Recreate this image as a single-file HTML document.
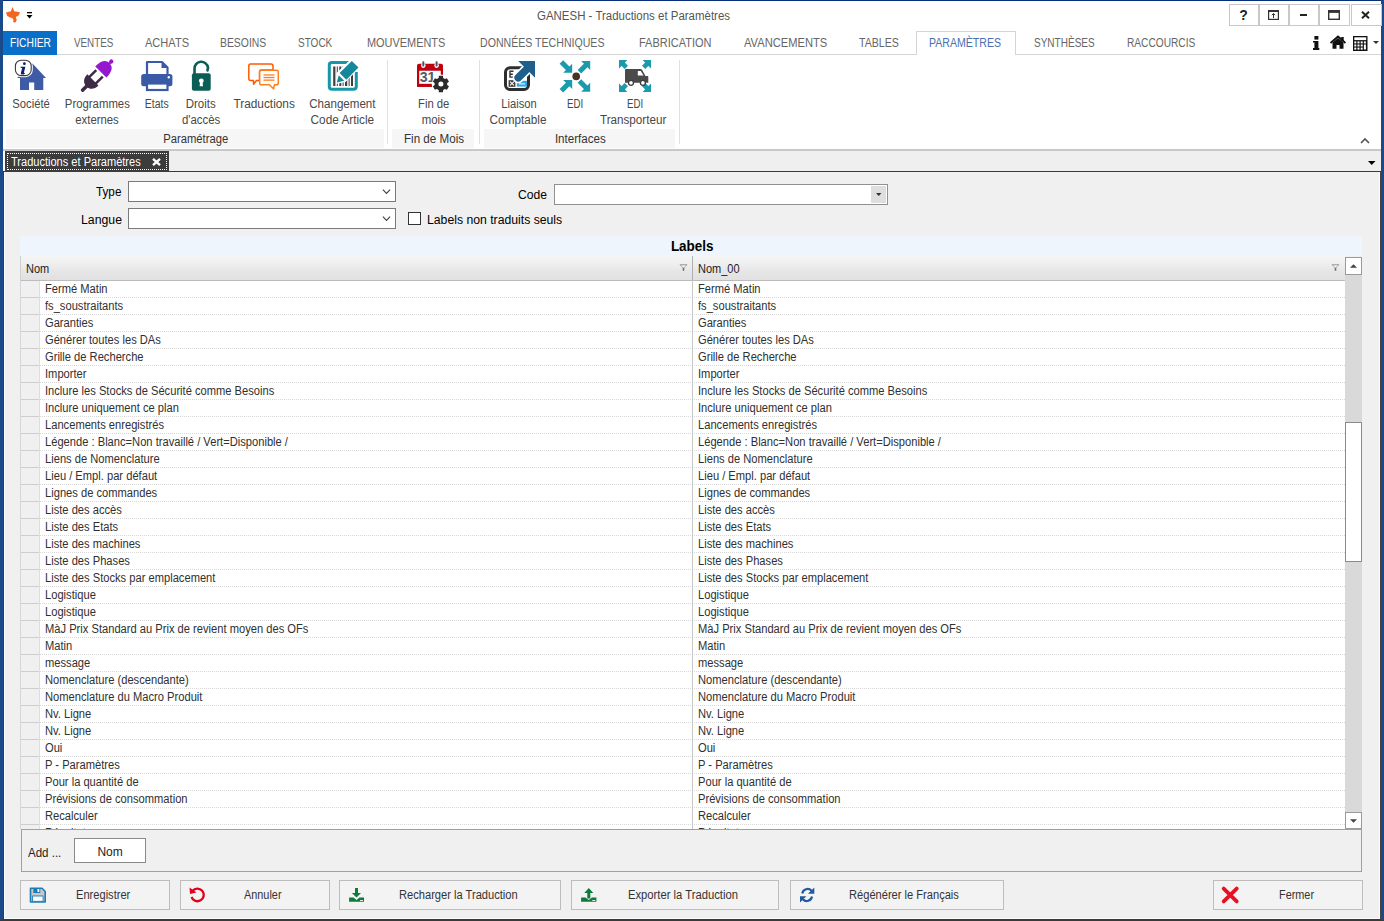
<!DOCTYPE html><html><head><meta charset="utf-8"><style>
html,body{margin:0;padding:0;}
body{width:1384px;height:921px;position:relative;overflow:hidden;background:#f0f0f0;font-family:"Liberation Sans", sans-serif;}
.t{position:absolute;white-space:nowrap;}
div{box-sizing:border-box;}
svg{position:absolute;overflow:visible;}
</style></head><body>
<div style="position:absolute;left:0px;top:0px;width:1384px;height:55px;background:#fff"></div>
<div style="position:absolute;left:0px;top:0px;width:1384px;height:1px;background:#0a2f7a"></div>
<div style="position:absolute;left:0px;top:0px;width:3px;height:921px;background:#1b4a8b"></div>
<div style="position:absolute;left:1381px;top:0px;width:3px;height:921px;background:#1b4a8b"></div>
<div style="position:absolute;left:3px;top:919px;width:1378px;height:2px;background:#3a3a3a"></div>
<div style="position:absolute;left:0px;top:920px;width:1384px;height:1px;background:#3a3a3a"></div>
<div class="t" style="left:537.00px;top:10px;font-size:12px;line-height:13.404px;color:#555;transform:scaleX(0.9551);transform-origin:0 0;">GANESH - Traductions et Paramètres</div>
<svg style="left:0;top:0" width="30" height="30" viewBox="0 0 30 30"><path d="M12.5 7 L14.2 11.3 L20 12.2 L18.6 15.6 L15.8 17 Q17.4 19.6 15.8 22 Q14.2 23.2 13 21.8 Q14.4 20.2 12.6 18.2 L10.2 17.6 L7.2 16 L6 12.4 L10.9 11.3 Z" fill="#f2661f"/></svg>
<svg style="left:26px;top:12px" width="8" height="8" viewBox="0 0 8 8"><rect x="1" y="0" width="5" height="1.3" fill="#000"/><path d="M0.5 3 L6.5 3 L3.5 6.5Z" fill="#000"/></svg>
<div style="position:absolute;left:1229px;top:4px;width:30px;height:22px;border:1px solid #c8c8c8;background:#fff"></div>
<div style="position:absolute;left:1259px;top:4px;width:30px;height:22px;border:1px solid #c8c8c8;background:#fff"></div>
<div style="position:absolute;left:1289px;top:4px;width:30px;height:22px;border:1px solid #c8c8c8;background:#fff"></div>
<div style="position:absolute;left:1319px;top:4px;width:31px;height:22px;border:1px solid #c8c8c8;background:#fff"></div>
<div style="position:absolute;left:1351px;top:4px;width:31px;height:22px;border:1px solid #c8c8c8;background:#fff"></div>
<div class="t" style="left:1239.22px;top:8px;font-size:14px;line-height:15.638px;color:#222;font-weight:bold;">?</div>
<svg style="left:1268px;top:10px" width="11" height="10" viewBox="0 0 11 10"><rect x="0.6" y="0.6" width="9.8" height="8.8" fill="none" stroke="#333" stroke-width="1.2"/><rect x="0.6" y="0.6" width="9.8" height="1.4" fill="#333"/><path d="M5.5 3.6 V8 M3.8 5.2 L5.5 3.5 L7.2 5.2" stroke="#333" stroke-width="1" fill="none"/></svg>
<div style="position:absolute;left:1300px;top:14px;width:7px;height:2px;background:#222"></div>
<svg style="left:1328px;top:10px" width="12" height="10" viewBox="0 0 12 10"><rect x="0.7" y="0.7" width="10.6" height="8.6" fill="none" stroke="#333" stroke-width="1.4"/><rect x="0.7" y="0.7" width="10.6" height="2.2" fill="#333"/></svg>
<svg style="left:1361px;top:11px" width="9" height="8" viewBox="0 0 9 8"><path d="M1 0.8 L8 7.2 M8 0.8 L1 7.2" stroke="#222" stroke-width="2"/></svg>
<div style="position:absolute;left:3px;top:54px;width:1378px;height:1px;background:#d5d5d5"></div>
<div style="position:absolute;left:3px;top:31px;width:54px;height:24px;background:#0a6fc8"></div>
<div class="t" style="left:10.00px;top:37px;font-size:12px;line-height:13.404px;color:#fff;transform:scaleX(0.8541);transform-origin:0 0;">FICHIER</div>
<div style="position:absolute;left:916px;top:31px;width:100px;height:24px;border:1px solid #d5d5d5;border-bottom:none;background:#fff"></div>
<div class="t" style="left:73.70px;top:37px;font-size:12px;line-height:13.404px;color:#666;transform:scaleX(0.8185);transform-origin:0 0;">VENTES</div>
<div class="t" style="left:145.00px;top:37px;font-size:12px;line-height:13.404px;color:#666;transform:scaleX(0.9208);transform-origin:0 0;">ACHATS</div>
<div class="t" style="left:220.20px;top:37px;font-size:12px;line-height:13.404px;color:#666;transform:scaleX(0.8660);transform-origin:0 0;">BESOINS</div>
<div class="t" style="left:298.20px;top:37px;font-size:12px;line-height:13.404px;color:#666;transform:scaleX(0.8341);transform-origin:0 0;">STOCK</div>
<div class="t" style="left:366.50px;top:37px;font-size:12px;line-height:13.404px;color:#666;transform:scaleX(0.9104);transform-origin:0 0;">MOUVEMENTS</div>
<div class="t" style="left:479.50px;top:37px;font-size:12px;line-height:13.404px;color:#666;transform:scaleX(0.8821);transform-origin:0 0;">DONNÉES TECHNIQUES</div>
<div class="t" style="left:639.00px;top:37px;font-size:12px;line-height:13.404px;color:#666;transform:scaleX(0.9163);transform-origin:0 0;">FABRICATION</div>
<div class="t" style="left:743.80px;top:37px;font-size:12px;line-height:13.404px;color:#666;transform:scaleX(0.9289);transform-origin:0 0;">AVANCEMENTS</div>
<div class="t" style="left:858.50px;top:37px;font-size:12px;line-height:13.404px;color:#666;transform:scaleX(0.8841);transform-origin:0 0;">TABLES</div>
<div class="t" style="left:929.00px;top:37px;font-size:12px;line-height:13.404px;color:#4a6fb0;transform:scaleX(0.8803);transform-origin:0 0;">PARAMÈTRES</div>
<div class="t" style="left:1034.30px;top:37px;font-size:12px;line-height:13.404px;color:#666;transform:scaleX(0.8351);transform-origin:0 0;">SYNTHÈSES</div>
<div class="t" style="left:1127.40px;top:37px;font-size:12px;line-height:13.404px;color:#666;transform:scaleX(0.8466);transform-origin:0 0;">RACCOURCIS</div>
<svg style="left:1313px;top:36px" width="7" height="15" viewBox="0 0 7 15"><rect x="1.4" y="0" width="4" height="3.6" fill="#111"/><path d="M0 5 H5.4 V12 H6.3 V14 H0 V12 H1.4 V6.5 H0 Z" fill="#111"/></svg>
<svg style="left:1330px;top:36px" width="16" height="13" viewBox="0 0 16 13"><path d="M0.5 7 L8 0.5 L15.5 7" stroke="#111" stroke-width="1.8" fill="none"/><path d="M2.5 6.5 L8 2 L13.5 6.5 V12.8 H9.5 V9 H6.5 V12.8 H2.5Z" fill="#111"/><rect x="11.2" y="1" width="2.5" height="4" fill="#111"/></svg>
<svg style="left:1353px;top:36px" width="15" height="15" viewBox="0 0 15 15"><rect x="0" y="0" width="14.5" height="15" fill="#111"/><rect x="1.3" y="1.3" width="11.9" height="2.8" fill="#fff"/><rect x="1.3" y="5.4" width="2" height="2" fill="#fff"/><rect x="4.5" y="5.4" width="2" height="2" fill="#fff"/><rect x="7.7" y="5.4" width="2" height="2" fill="#fff"/><rect x="10.9" y="5.4" width="2" height="2" fill="#fff"/><rect x="1.3" y="8.5" width="2" height="2" fill="#fff"/><rect x="4.5" y="8.5" width="2" height="2" fill="#fff"/><rect x="7.7" y="8.5" width="2" height="2" fill="#fff"/><rect x="1.3" y="11.6" width="2" height="2" fill="#fff"/><rect x="4.5" y="11.6" width="2" height="2" fill="#fff"/><rect x="7.7" y="11.6" width="2" height="2" fill="#fff"/><rect x="10.9" y="8.5" width="2" height="5" fill="#fff"/></svg>
<svg style="left:1373px;top:41px" width="6" height="3" viewBox="0 0 6 3"><path d="M0 0 H6 L3 3Z" fill="#333"/></svg>
<div style="position:absolute;left:3px;top:55px;width:1378px;height:94px;background:#fff"></div>
<div style="position:absolute;left:6px;top:129px;width:378px;height:19px;background:#f6f6f6"></div>
<div style="position:absolute;left:392px;top:129px;width:82px;height:19px;background:#f6f6f6"></div>
<div style="position:absolute;left:484px;top:129px;width:191px;height:19px;background:#f6f6f6"></div>
<div style="position:absolute;left:387px;top:60px;width:1px;height:84px;background:#e0e0e0"></div>
<div style="position:absolute;left:479px;top:60px;width:1px;height:84px;background:#e0e0e0"></div>
<div style="position:absolute;left:679px;top:60px;width:1px;height:84px;background:#e0e0e0"></div>
<div style="position:absolute;left:3px;top:149px;width:1378px;height:2px;background:#c8c8c8"></div>
<svg style="left:1360px;top:137px" width="10" height="7" viewBox="0 0 10 7"><path d="M1 6 L5 2 L9 6" stroke="#555" stroke-width="1.6" fill="none"/></svg>
<div class="t" style="left:11.39px;top:98px;font-size:12px;line-height:13.404px;color:#484848;transform:scaleX(0.9394);transform-origin:50% 0;">Société</div>
<div class="t" style="left:63.16px;top:98px;font-size:12px;line-height:13.404px;color:#484848;transform:scaleX(0.9463);transform-origin:50% 0;">Programmes</div>
<div class="t" style="left:74.49px;top:114px;font-size:12px;line-height:13.404px;color:#484848;transform:scaleX(0.9429);transform-origin:50% 0;">externes</div>
<div class="t" style="left:143.13px;top:98px;font-size:12px;line-height:13.404px;color:#484848;transform:scaleX(0.8740);transform-origin:50% 0;">Etats</div>
<div class="t" style="left:185.33px;top:98px;font-size:12px;line-height:13.404px;color:#484848;transform:scaleX(0.9573);transform-origin:50% 0;">Droits</div>
<div class="t" style="left:180.74px;top:114px;font-size:12px;line-height:13.404px;color:#484848;transform:scaleX(0.9500);transform-origin:50% 0;">d'accès</div>
<div class="t" style="left:233.17px;top:98px;font-size:12px;line-height:13.404px;color:#484848;transform:scaleX(0.9879);transform-origin:50% 0;">Traductions</div>
<div class="t" style="left:308.34px;top:98px;font-size:12px;line-height:13.404px;color:#484848;transform:scaleX(0.9634);transform-origin:50% 0;">Changement</div>
<div class="t" style="left:310.15px;top:114px;font-size:12px;line-height:13.404px;color:#484848;transform:scaleX(0.9814);transform-origin:50% 0;">Code Article</div>
<div class="t" style="left:416.62px;top:98px;font-size:12px;line-height:13.404px;color:#484848;transform:scaleX(0.9414);transform-origin:50% 0;">Fin de</div>
<div class="t" style="left:421.43px;top:114px;font-size:12px;line-height:13.404px;color:#484848;transform:scaleX(0.9472);transform-origin:50% 0;">mois</div>
<div class="t" style="left:499.69px;top:98px;font-size:12px;line-height:13.404px;color:#484848;transform:scaleX(0.9309);transform-origin:50% 0;">Liaison</div>
<div class="t" style="left:488.78px;top:114px;font-size:12px;line-height:13.404px;color:#484848;transform:scaleX(0.9787);transform-origin:50% 0;">Comptable</div>
<div class="t" style="left:564.80px;top:98px;font-size:12px;line-height:13.404px;color:#484848;transform:scaleX(0.8098);transform-origin:50% 0;">EDI</div>
<div class="t" style="left:624.80px;top:98px;font-size:12px;line-height:13.404px;color:#484848;transform:scaleX(0.8098);transform-origin:50% 0;">EDI</div>
<div class="t" style="left:599.07px;top:114px;font-size:12px;line-height:13.404px;color:#484848;transform:scaleX(0.9728);transform-origin:50% 0;">Transporteur</div>
<div class="t" style="left:160.81px;top:133px;font-size:12px;line-height:13.404px;color:#333;transform:scaleX(0.9370);transform-origin:50% 0;">Paramétrage</div>
<div class="t" style="left:402.89px;top:133px;font-size:12px;line-height:13.404px;color:#333;transform:scaleX(0.9674);transform-origin:50% 0;">Fin de Mois</div>
<div class="t" style="left:554.15px;top:133px;font-size:12px;line-height:13.404px;color:#333;transform:scaleX(0.9659);transform-origin:50% 0;">Interfaces</div>
<svg style="left:0;top:0" width="1384" height="160" viewBox="0 0 1384 160"><path d="M17 78 L32.5 63.5 L46 78 L43.3 78 L43.3 90 L34.2 90 L34.2 82.5 L29 82.5 L29 90 L20 90 L20 78 Z" fill="#3d5ba6"/><rect x="14.6" y="59.4" width="17.4" height="17" rx="6.5" fill="#fff" stroke="#fff" stroke-width="1.6"/><rect x="15.4" y="60.2" width="15.8" height="15.4" rx="5.8" fill="#fff" stroke="#3a3a3a" stroke-width="1.1"/><circle cx="24.4" cy="63.7" r="1.4" fill="#0d1f6e"/><path d="M20.8 66.8 H25.4 L23.9 72.4 Q23.8 73.1 24.7 72.8 L24.9 73.7 Q23.2 74.8 21.6 74.5 Q20.6 74.2 20.9 73.1 L22.2 67.9 H20.6 Z" fill="#0d1f6e"/><g transform="rotate(45 97 75.8)"><circle cx="97" cy="55.6" r="2.1" fill="#9518cf"/><rect x="96" y="56" width="2" height="3" fill="#9518cf"/><path d="M89.15 70.4 C89.15 62 92 58 97 58 C102 58 104.85 62 104.85 70.4 Z" fill="#9518cf"/><rect x="91.2" y="72.3" width="2.5" height="10" fill="#3d2b47"/><rect x="100.4" y="72.3" width="2.5" height="10" fill="#3d2b47"/><path d="M89.15 81.6 H104.85 C104.85 87 102 90.8 97 90.8 C92 90.8 89.15 87 89.15 81.6 Z" fill="#3d2b47"/><rect x="95.2" y="89" width="3.6" height="8.8" rx="1.5" fill="#3d2b47"/></g><path d="M147 62 H162 L167.5 67.5 V75 H147 Z" fill="#fff" stroke="#3a5aa8" stroke-width="2.2" stroke-linejoin="round"/><path d="M161.5 62 V68 H167.5Z" fill="#3a5aa8"/><rect x="141.2" y="74" width="31.2" height="12.2" rx="2.5" fill="#3a5aa8"/><circle cx="168.8" cy="77.2" r="1.2" fill="#fff"/><rect x="147" y="83.5" width="20.5" height="6.5" fill="#fff" stroke="#3a5aa8" stroke-width="2.2"/><path d="M194.5 74 V69 A6.8 6.8 0 0 1 208 67.5 L207.5 70.5" fill="none" stroke="#0b5e55" stroke-width="2.6" stroke-linecap="round"/><rect x="191.9" y="73.2" width="18.8" height="17.6" rx="2" fill="#0b5e55"/><circle cx="201.3" cy="80.8" r="2.4" fill="#fff"/><path d="M200.1 81.5 H202.5 L203 86.3 H199.6Z" fill="#fff"/><path d="M250.5 64 H271 Q273 64 273 66 V70 H261 Q259.5 70 259.5 72 V80.5 H256.5 L253.5 84.3 L253.5 80.5 H250.5 Q248.8 80.5 248.8 78.5 V66 Q248.8 64 250.5 64 Z" fill="none" stroke="#ff5a00" stroke-width="1.5" stroke-linejoin="round"/><path d="M261.5 70.2 H276.5 Q278.3 70.2 278.3 72 V83 Q278.3 84.8 276.5 84.8 H274.5 L273.5 88.8 L269.5 84.8 H261.5 Q259.7 84.8 259.7 83 V72 Q259.7 70.2 261.5 70.2 Z" fill="#fff" stroke="#ff7f1e" stroke-width="1.5" stroke-linejoin="round"/><rect x="263.5" y="74.3" width="11" height="1.3" fill="#ff7f1e"/><rect x="263.5" y="76.9" width="11" height="1.3" fill="#ff7f1e"/><rect x="263.5" y="79.5" width="11" height="1.3" fill="#ff7f1e"/><path d="M350 62.6 H332 Q329.3 62.6 329.3 65.3 V86.5 Q329.3 89.2 332 89.2 H353.5 Q356.3 89.2 356.3 86.5 V72" fill="none" stroke="#1796a8" stroke-width="3"/><rect x="333.2" y="66.5" width="2.2" height="19.5" fill="#3f3f3f"/><rect x="336.8" y="66.5" width="1.0" height="19.5" fill="#3f3f3f"/><rect x="339.3" y="66.5" width="2.0" height="19.5" fill="#3f3f3f"/><rect x="342.6" y="66.5" width="1.0" height="19.5" fill="#3f3f3f"/><rect x="345" y="66.5" width="2.2" height="19.5" fill="#3f3f3f"/><rect x="348.6" y="66.5" width="1.0" height="19.5" fill="#3f3f3f"/><rect x="351" y="66.5" width="2.0" height="19.5" fill="#3f3f3f"/><path d="M336 84 L336.5 73 L351.5 58.5 L360.5 67 L345.5 82 Z" fill="#fff"/><path d="M351.8 61 L358.5 67.5 L346.3 79.7 L339.6 73 Z" fill="#15879a"/><path d="M338.7 75.3 L344.2 80.8 L336.8 82.6 Z" fill="#15879a"/><path d="M418.1 74.5 V85.7 H432 M418.1 70 V85.7" fill="none" stroke="#c0000e" stroke-width="2.2"/><rect x="417" y="83.8" width="16" height="3" fill="#c0000e"/><path d="M417 70.8 V65.8 Q417 63.8 419 63.8 H441 Q443 63.8 443 65.8 V74.7 H440.8 V70.8 Z" fill="#c0000e"/><circle cx="423.3" cy="65.6" r="2.3" fill="#fff"/><circle cx="436.6" cy="65.6" r="2.3" fill="#fff"/><rect x="422.3" y="61.2" width="2" height="5.4" rx="0.8" fill="#46576a"/><rect x="435.6" y="61.2" width="2" height="5.4" rx="0.8" fill="#46576a"/><text x="419.8" y="82.4" font-family="Liberation Sans" font-weight="bold" font-size="14.2" fill="#4f5c69" letter-spacing="-0.3">31</text><circle cx="440.9" cy="84" r="9.2" fill="#fff"/><polygon points="444.05,78.54 443.16,78.12 442.93,75.85 438.87,75.85 438.64,78.12 437.75,78.54 437.75,78.54 436.94,79.10 434.86,78.16 432.83,81.68 434.68,83.01 434.60,84.00 434.60,84.00 434.68,84.99 432.83,86.32 434.86,89.84 436.94,88.90 437.75,89.46 437.75,89.46 438.64,89.88 438.87,92.15 442.93,92.15 443.16,89.88 444.05,89.46 444.05,89.46 444.86,88.90 446.94,89.84 448.97,86.32 447.12,84.99 447.20,84.00 447.20,84.00 447.12,83.01 448.97,81.68 446.94,78.16 444.86,79.10 444.05,78.54" fill="#2b2b2b" stroke="#fff" stroke-width="0.01"/><circle cx="440.9" cy="84" r="2.5" fill="#fff"/><rect x="505.5" y="67.8" width="23" height="21.8" rx="4.5" fill="#fff" stroke="#2e2e2e" stroke-width="3"/><path d="M509.3 71.3 H513.5 M509.3 74.2 H512.8 M509.3 77.1 H513.5 M510 71 V77.5" stroke="#333" stroke-width="1.4"/><rect x="508.6" y="80.2" width="6.8" height="6.6" fill="#3a3a3a"/><path d="M510 81.6 L514 85.4 M514 81.6 L510 85.4" stroke="#fff" stroke-width="1.1"/><rect x="516.8" y="80.8" width="10.2" height="5.8" fill="#2ca8ea"/><rect x="519" y="83.4" width="6" height="1" fill="#fff"/><line x1="527" y1="69" x2="518.2" y2="77.8" stroke="#fff" stroke-width="11" stroke-linecap="round"/><polygon points="536.5,59 515,59 536.5,80.5" fill="#fff"/><line x1="527" y1="69" x2="518.2" y2="77.8" stroke="#1f5f8b" stroke-width="7.6" stroke-linecap="round"/><polygon points="535,61 518.2,61 535,77.8" fill="#1f5f8b"/><polygon points="572.2,72.8 563.2,72.8 572.2,63.8" fill="#1a9aaa"/><line x1="568.1500000000001" y1="68.75" x2="561.4000000000001" y2="62.0" stroke="#1a9aaa" stroke-width="5"/><polygon points="590.2,61 581.2,61 590.2,70" fill="#1a9aaa"/><line x1="586.1500000000001" y1="65.05" x2="579.4000000000001" y2="71.8" stroke="#1a9aaa" stroke-width="5"/><polygon points="572.2,80 563.2,80 572.2,89" fill="#1a9aaa"/><line x1="568.1500000000001" y1="84.05" x2="561.4000000000001" y2="90.8" stroke="#1a9aaa" stroke-width="5"/><polygon points="590.2,91.8 581.2,91.8 590.2,82.8" fill="#1a9aaa"/><line x1="586.1500000000001" y1="87.75" x2="579.4000000000001" y2="81.0" stroke="#1a9aaa" stroke-width="5"/><circle cx="576.2" cy="76.4" r="3.8" fill="#4a3322"/><polygon points="619,60 627.4,60 619,68.4" fill="#1a9aaa"/><line x1="622" y1="63" x2="626.3" y2="67.3" stroke="#1a9aaa" stroke-width="4.6"/><polygon points="651,60 642.6,60 651,68.4" fill="#1a9aaa"/><line x1="648" y1="63" x2="643.7" y2="67.3" stroke="#1a9aaa" stroke-width="4.6"/><polygon points="619,92 627.4,92 619,83.6" fill="#1a9aaa"/><line x1="622" y1="89" x2="626.3" y2="84.7" stroke="#1a9aaa" stroke-width="4.6"/><polygon points="651,92 642.6,92 651,83.6" fill="#1a9aaa"/><line x1="648" y1="89" x2="643.7" y2="84.7" stroke="#1a9aaa" stroke-width="4.6"/><path d="M625 70 Q625 69 626 69 H640.5 Q641.5 69 642.2 70 L645.5 76 H647.5 Q648.3 76 648.3 77 V82.8 H625 Z" fill="#4a4a4a"/><path d="M637.8 71 H640.8 L643.5 75.5 H637.8Z" fill="#fff"/><circle cx="631" cy="82.8" r="2.5" fill="#fff" stroke="#3a3a3a" stroke-width="1.3"/><circle cx="642.9" cy="82.8" r="2.5" fill="#fff" stroke="#3a3a3a" stroke-width="1.3"/></svg>
<div style="position:absolute;left:3px;top:151px;width:1378px;height:20px;background:#efefef"></div>
<div style="position:absolute;left:3px;top:171px;width:1378px;height:1px;background:#3a3a3a"></div>
<div style="position:absolute;left:3px;top:151px;width:2px;height:20px;background:#fcfcfc"></div>
<div style="position:absolute;left:5px;top:151px;width:164px;height:21px;background:#3c3c3c"></div>
<div style="position:absolute;left:7px;top:153px;width:160px;height:17px;border:1px dotted #fff"></div>
<div class="t" style="left:11.40px;top:156px;font-size:12px;line-height:13.404px;color:#fff;transform:scaleX(0.9202);transform-origin:0 0;">Traductions et Paramètres</div>
<svg style="left:152px;top:158px" width="9" height="8" viewBox="0 0 9 8"><path d="M1 0.8 L8 7.2 M8 0.8 L1 7.2" stroke="#fff" stroke-width="2.4"/></svg>
<svg style="left:1368px;top:161px" width="8" height="4" viewBox="0 0 8 4"><path d="M0 0 H7.5 L3.75 4Z" fill="#000"/></svg>
<div style="position:absolute;left:1380px;top:172px;width:1px;height:747px;background:#444"></div>
<div style="position:absolute;left:1379px;top:172px;width:1px;height:746px;background:#fcfcfc"></div>
<div style="position:absolute;left:3px;top:918px;width:1377px;height:1px;background:#fcfcfc"></div>
<div style="position:absolute;left:3px;top:171px;width:1px;height:749px;background:#3a3a3a"></div>
<div style="position:absolute;left:4px;top:172px;width:1px;height:746px;background:#fcfcfc"></div>
<div class="t" style="left:96.20px;top:186px;font-size:12px;line-height:13.404px;color:#000;transform:scaleX(0.9763);transform-origin:0 0;">Type</div>
<div class="t" style="left:80.60px;top:214px;font-size:12px;line-height:13.404px;color:#000;transform:scaleX(1.0238);transform-origin:0 0;">Langue</div>
<div style="position:absolute;left:128px;top:181px;width:268px;height:21px;background:#fff;border:1px solid #7a7a7a"></div>
<svg style="left:382px;top:189.0px" width="10" height="6" viewBox="0 0 10 6"><path d="M0.9 0.7 L4.5 4.5 L8.1 0.7" stroke="#404040" stroke-width="1.1" fill="none"/></svg>
<div style="position:absolute;left:128px;top:208px;width:268px;height:21px;background:#fff;border:1px solid #7a7a7a"></div>
<svg style="left:382px;top:216.0px" width="10" height="6" viewBox="0 0 10 6"><path d="M0.9 0.7 L4.5 4.5 L8.1 0.7" stroke="#404040" stroke-width="1.1" fill="none"/></svg>
<div class="t" style="left:517.70px;top:189px;font-size:12px;line-height:13.404px;color:#000;transform:scaleX(1.0108);transform-origin:0 0;">Code</div>
<div style="position:absolute;left:554px;top:184px;width:334px;height:21px;background:#fff;border:1px solid #909090"></div>
<div style="position:absolute;left:871px;top:186px;width:15px;height:17px;background:#dedede"></div>
<svg style="left:876px;top:193px" width="6" height="4" viewBox="0 0 6 4"><path d="M0 0 H5.5 L2.75 3Z" fill="#333"/></svg>
<div style="position:absolute;left:408px;top:212px;width:13px;height:13px;background:#fff;border:1px solid #333"></div>
<div class="t" style="left:427.30px;top:214px;font-size:12px;line-height:13.404px;color:#000;transform:scaleX(1.0184);transform-origin:0 0;">Labels non traduits seuls</div>
<div style="position:absolute;left:20px;top:236px;width:1342px;height:20px;background:#eef5fc"></div>
<div class="t" style="left:669.82px;top:239px;font-size:14px;line-height:15.638px;color:#000;font-weight:bold;transform:scaleX(0.9583);transform-origin:50% 0;">Labels</div>
<div style="position:absolute;left:20px;top:256px;width:1325px;height:24px;background:linear-gradient(#f4f5f6,#eeeeee 35%,#e6e6e6 65%,#e1e1e1)"></div>
<div style="position:absolute;left:20px;top:280px;width:1325px;height:1px;background:#bcbcbc"></div>
<div style="position:absolute;left:692px;top:256px;width:1px;height:24px;background:#b0b0b0"></div>
<div class="t" style="left:25.50px;top:263px;font-size:12px;line-height:13.404px;color:#222;transform:scaleX(0.9167);transform-origin:0 0;">Nom</div>
<div class="t" style="left:698.00px;top:263px;font-size:12px;line-height:13.404px;color:#222;transform:scaleX(0.9167);transform-origin:0 0;">Nom_00</div>
<svg style="left:679px;top:264px" width="9" height="7" viewBox="0 0 9 7"><path d="M0.5 0.5 H8.5 L5.3 3.6 V6.8 H3.7 V3.6 Z" fill="#6e6e6e"/><path d="M1.8 1.3 H7.2 L4.5 3.8Z" fill="#fff"/></svg>
<svg style="left:1331px;top:264px" width="9" height="7" viewBox="0 0 9 7"><path d="M0.5 0.5 H8.5 L5.3 3.6 V6.8 H3.7 V3.6 Z" fill="#6e6e6e"/><path d="M1.8 1.3 H7.2 L4.5 3.8Z" fill="#fff"/></svg>
<div style="position:absolute;left:20px;top:281px;width:1325px;height:548px;overflow:hidden;background:#fff">
<div style="position:absolute;left:0;top:0;width:20px;height:548px;background:#f0f0f0"></div>
<div style="position:absolute;left:0;top:16px;width:20px;height:1px;background:#cecece"></div>
<div style="position:absolute;left:20px;top:16px;width:1305px;height:1px;background-image:linear-gradient(90deg,#d8d8d8 50%,transparent 50%);background-size:2px 1px"></div>
<div style="position:absolute;left:0;top:33px;width:20px;height:1px;background:#cecece"></div>
<div style="position:absolute;left:20px;top:33px;width:1305px;height:1px;background-image:linear-gradient(90deg,#d8d8d8 50%,transparent 50%);background-size:2px 1px"></div>
<div style="position:absolute;left:0;top:50px;width:20px;height:1px;background:#cecece"></div>
<div style="position:absolute;left:20px;top:50px;width:1305px;height:1px;background-image:linear-gradient(90deg,#d8d8d8 50%,transparent 50%);background-size:2px 1px"></div>
<div style="position:absolute;left:0;top:67px;width:20px;height:1px;background:#cecece"></div>
<div style="position:absolute;left:20px;top:67px;width:1305px;height:1px;background-image:linear-gradient(90deg,#d8d8d8 50%,transparent 50%);background-size:2px 1px"></div>
<div style="position:absolute;left:0;top:84px;width:20px;height:1px;background:#cecece"></div>
<div style="position:absolute;left:20px;top:84px;width:1305px;height:1px;background-image:linear-gradient(90deg,#d8d8d8 50%,transparent 50%);background-size:2px 1px"></div>
<div style="position:absolute;left:0;top:101px;width:20px;height:1px;background:#cecece"></div>
<div style="position:absolute;left:20px;top:101px;width:1305px;height:1px;background-image:linear-gradient(90deg,#d8d8d8 50%,transparent 50%);background-size:2px 1px"></div>
<div style="position:absolute;left:0;top:118px;width:20px;height:1px;background:#cecece"></div>
<div style="position:absolute;left:20px;top:118px;width:1305px;height:1px;background-image:linear-gradient(90deg,#d8d8d8 50%,transparent 50%);background-size:2px 1px"></div>
<div style="position:absolute;left:0;top:135px;width:20px;height:1px;background:#cecece"></div>
<div style="position:absolute;left:20px;top:135px;width:1305px;height:1px;background-image:linear-gradient(90deg,#d8d8d8 50%,transparent 50%);background-size:2px 1px"></div>
<div style="position:absolute;left:0;top:152px;width:20px;height:1px;background:#cecece"></div>
<div style="position:absolute;left:20px;top:152px;width:1305px;height:1px;background-image:linear-gradient(90deg,#d8d8d8 50%,transparent 50%);background-size:2px 1px"></div>
<div style="position:absolute;left:0;top:169px;width:20px;height:1px;background:#cecece"></div>
<div style="position:absolute;left:20px;top:169px;width:1305px;height:1px;background-image:linear-gradient(90deg,#d8d8d8 50%,transparent 50%);background-size:2px 1px"></div>
<div style="position:absolute;left:0;top:186px;width:20px;height:1px;background:#cecece"></div>
<div style="position:absolute;left:20px;top:186px;width:1305px;height:1px;background-image:linear-gradient(90deg,#d8d8d8 50%,transparent 50%);background-size:2px 1px"></div>
<div style="position:absolute;left:0;top:203px;width:20px;height:1px;background:#cecece"></div>
<div style="position:absolute;left:20px;top:203px;width:1305px;height:1px;background-image:linear-gradient(90deg,#d8d8d8 50%,transparent 50%);background-size:2px 1px"></div>
<div style="position:absolute;left:0;top:220px;width:20px;height:1px;background:#cecece"></div>
<div style="position:absolute;left:20px;top:220px;width:1305px;height:1px;background-image:linear-gradient(90deg,#d8d8d8 50%,transparent 50%);background-size:2px 1px"></div>
<div style="position:absolute;left:0;top:237px;width:20px;height:1px;background:#cecece"></div>
<div style="position:absolute;left:20px;top:237px;width:1305px;height:1px;background-image:linear-gradient(90deg,#d8d8d8 50%,transparent 50%);background-size:2px 1px"></div>
<div style="position:absolute;left:0;top:254px;width:20px;height:1px;background:#cecece"></div>
<div style="position:absolute;left:20px;top:254px;width:1305px;height:1px;background-image:linear-gradient(90deg,#d8d8d8 50%,transparent 50%);background-size:2px 1px"></div>
<div style="position:absolute;left:0;top:271px;width:20px;height:1px;background:#cecece"></div>
<div style="position:absolute;left:20px;top:271px;width:1305px;height:1px;background-image:linear-gradient(90deg,#d8d8d8 50%,transparent 50%);background-size:2px 1px"></div>
<div style="position:absolute;left:0;top:288px;width:20px;height:1px;background:#cecece"></div>
<div style="position:absolute;left:20px;top:288px;width:1305px;height:1px;background-image:linear-gradient(90deg,#d8d8d8 50%,transparent 50%);background-size:2px 1px"></div>
<div style="position:absolute;left:0;top:305px;width:20px;height:1px;background:#cecece"></div>
<div style="position:absolute;left:20px;top:305px;width:1305px;height:1px;background-image:linear-gradient(90deg,#d8d8d8 50%,transparent 50%);background-size:2px 1px"></div>
<div style="position:absolute;left:0;top:322px;width:20px;height:1px;background:#cecece"></div>
<div style="position:absolute;left:20px;top:322px;width:1305px;height:1px;background-image:linear-gradient(90deg,#d8d8d8 50%,transparent 50%);background-size:2px 1px"></div>
<div style="position:absolute;left:0;top:339px;width:20px;height:1px;background:#cecece"></div>
<div style="position:absolute;left:20px;top:339px;width:1305px;height:1px;background-image:linear-gradient(90deg,#d8d8d8 50%,transparent 50%);background-size:2px 1px"></div>
<div style="position:absolute;left:0;top:356px;width:20px;height:1px;background:#cecece"></div>
<div style="position:absolute;left:20px;top:356px;width:1305px;height:1px;background-image:linear-gradient(90deg,#d8d8d8 50%,transparent 50%);background-size:2px 1px"></div>
<div style="position:absolute;left:0;top:373px;width:20px;height:1px;background:#cecece"></div>
<div style="position:absolute;left:20px;top:373px;width:1305px;height:1px;background-image:linear-gradient(90deg,#d8d8d8 50%,transparent 50%);background-size:2px 1px"></div>
<div style="position:absolute;left:0;top:390px;width:20px;height:1px;background:#cecece"></div>
<div style="position:absolute;left:20px;top:390px;width:1305px;height:1px;background-image:linear-gradient(90deg,#d8d8d8 50%,transparent 50%);background-size:2px 1px"></div>
<div style="position:absolute;left:0;top:407px;width:20px;height:1px;background:#cecece"></div>
<div style="position:absolute;left:20px;top:407px;width:1305px;height:1px;background-image:linear-gradient(90deg,#d8d8d8 50%,transparent 50%);background-size:2px 1px"></div>
<div style="position:absolute;left:0;top:424px;width:20px;height:1px;background:#cecece"></div>
<div style="position:absolute;left:20px;top:424px;width:1305px;height:1px;background-image:linear-gradient(90deg,#d8d8d8 50%,transparent 50%);background-size:2px 1px"></div>
<div style="position:absolute;left:0;top:441px;width:20px;height:1px;background:#cecece"></div>
<div style="position:absolute;left:20px;top:441px;width:1305px;height:1px;background-image:linear-gradient(90deg,#d8d8d8 50%,transparent 50%);background-size:2px 1px"></div>
<div style="position:absolute;left:0;top:458px;width:20px;height:1px;background:#cecece"></div>
<div style="position:absolute;left:20px;top:458px;width:1305px;height:1px;background-image:linear-gradient(90deg,#d8d8d8 50%,transparent 50%);background-size:2px 1px"></div>
<div style="position:absolute;left:0;top:475px;width:20px;height:1px;background:#cecece"></div>
<div style="position:absolute;left:20px;top:475px;width:1305px;height:1px;background-image:linear-gradient(90deg,#d8d8d8 50%,transparent 50%);background-size:2px 1px"></div>
<div style="position:absolute;left:0;top:492px;width:20px;height:1px;background:#cecece"></div>
<div style="position:absolute;left:20px;top:492px;width:1305px;height:1px;background-image:linear-gradient(90deg,#d8d8d8 50%,transparent 50%);background-size:2px 1px"></div>
<div style="position:absolute;left:0;top:509px;width:20px;height:1px;background:#cecece"></div>
<div style="position:absolute;left:20px;top:509px;width:1305px;height:1px;background-image:linear-gradient(90deg,#d8d8d8 50%,transparent 50%);background-size:2px 1px"></div>
<div style="position:absolute;left:0;top:526px;width:20px;height:1px;background:#cecece"></div>
<div style="position:absolute;left:20px;top:526px;width:1305px;height:1px;background-image:linear-gradient(90deg,#d8d8d8 50%,transparent 50%);background-size:2px 1px"></div>
<div style="position:absolute;left:0;top:543px;width:20px;height:1px;background:#cecece"></div>
<div style="position:absolute;left:20px;top:543px;width:1305px;height:1px;background-image:linear-gradient(90deg,#d8d8d8 50%,transparent 50%);background-size:2px 1px"></div>
<div style="position:absolute;left:0;top:560px;width:20px;height:1px;background:#cecece"></div>
<div style="position:absolute;left:20px;top:560px;width:1305px;height:1px;background-image:linear-gradient(90deg,#d8d8d8 50%,transparent 50%);background-size:2px 1px"></div>
<div style="position:absolute;left:672px;top:0;width:1px;height:548px;background:#c8c8c8"></div>
<div style="position:absolute;left:0;top:0;width:1px;height:548px;background:#d6d6d6"></div><div style="position:absolute;left:19px;top:0;width:1px;height:548px;background:#dedede"></div>
</div>
<div style="position:absolute;left:20px;top:256px;width:1px;height:25px;background:#d0d0d0"></div>
<div class="t" style="left:44.80px;top:283px;font-size:12px;line-height:13.404px;color:#303030;transform:scaleX(0.9291);transform-origin:0 0;">Fermé Matin</div>
<div class="t" style="left:697.80px;top:283px;font-size:12px;line-height:13.404px;color:#303030;transform:scaleX(0.9291);transform-origin:0 0;">Fermé Matin</div>
<div class="t" style="left:44.80px;top:300px;font-size:12px;line-height:13.404px;color:#303030;transform:scaleX(0.9291);transform-origin:0 0;">fs_soustraitants</div>
<div class="t" style="left:697.80px;top:300px;font-size:12px;line-height:13.404px;color:#303030;transform:scaleX(0.9291);transform-origin:0 0;">fs_soustraitants</div>
<div class="t" style="left:44.80px;top:317px;font-size:12px;line-height:13.404px;color:#303030;transform:scaleX(0.9291);transform-origin:0 0;">Garanties</div>
<div class="t" style="left:697.80px;top:317px;font-size:12px;line-height:13.404px;color:#303030;transform:scaleX(0.9291);transform-origin:0 0;">Garanties</div>
<div class="t" style="left:44.80px;top:334px;font-size:12px;line-height:13.404px;color:#303030;transform:scaleX(0.9291);transform-origin:0 0;">Générer toutes les DAs</div>
<div class="t" style="left:697.80px;top:334px;font-size:12px;line-height:13.404px;color:#303030;transform:scaleX(0.9291);transform-origin:0 0;">Générer toutes les DAs</div>
<div class="t" style="left:44.80px;top:351px;font-size:12px;line-height:13.404px;color:#303030;transform:scaleX(0.9291);transform-origin:0 0;">Grille de Recherche</div>
<div class="t" style="left:697.80px;top:351px;font-size:12px;line-height:13.404px;color:#303030;transform:scaleX(0.9291);transform-origin:0 0;">Grille de Recherche</div>
<div class="t" style="left:44.80px;top:368px;font-size:12px;line-height:13.404px;color:#303030;transform:scaleX(0.9291);transform-origin:0 0;">Importer</div>
<div class="t" style="left:697.80px;top:368px;font-size:12px;line-height:13.404px;color:#303030;transform:scaleX(0.9291);transform-origin:0 0;">Importer</div>
<div class="t" style="left:44.80px;top:385px;font-size:12px;line-height:13.404px;color:#303030;transform:scaleX(0.9291);transform-origin:0 0;">Inclure les Stocks de Sécurité comme Besoins</div>
<div class="t" style="left:697.80px;top:385px;font-size:12px;line-height:13.404px;color:#303030;transform:scaleX(0.9291);transform-origin:0 0;">Inclure les Stocks de Sécurité comme Besoins</div>
<div class="t" style="left:44.80px;top:402px;font-size:12px;line-height:13.404px;color:#303030;transform:scaleX(0.9291);transform-origin:0 0;">Inclure uniquement ce plan</div>
<div class="t" style="left:697.80px;top:402px;font-size:12px;line-height:13.404px;color:#303030;transform:scaleX(0.9291);transform-origin:0 0;">Inclure uniquement ce plan</div>
<div class="t" style="left:44.80px;top:419px;font-size:12px;line-height:13.404px;color:#303030;transform:scaleX(0.9291);transform-origin:0 0;">Lancements enregistrés</div>
<div class="t" style="left:697.80px;top:419px;font-size:12px;line-height:13.404px;color:#303030;transform:scaleX(0.9291);transform-origin:0 0;">Lancements enregistrés</div>
<div class="t" style="left:44.80px;top:436px;font-size:12px;line-height:13.404px;color:#303030;transform:scaleX(0.9291);transform-origin:0 0;">Légende : Blanc=Non travaillé / Vert=Disponible /</div>
<div class="t" style="left:697.80px;top:436px;font-size:12px;line-height:13.404px;color:#303030;transform:scaleX(0.9291);transform-origin:0 0;">Légende : Blanc=Non travaillé / Vert=Disponible /</div>
<div class="t" style="left:44.80px;top:453px;font-size:12px;line-height:13.404px;color:#303030;transform:scaleX(0.9291);transform-origin:0 0;">Liens de Nomenclature</div>
<div class="t" style="left:697.80px;top:453px;font-size:12px;line-height:13.404px;color:#303030;transform:scaleX(0.9291);transform-origin:0 0;">Liens de Nomenclature</div>
<div class="t" style="left:44.80px;top:470px;font-size:12px;line-height:13.404px;color:#303030;transform:scaleX(0.9291);transform-origin:0 0;">Lieu / Empl. par défaut</div>
<div class="t" style="left:697.80px;top:470px;font-size:12px;line-height:13.404px;color:#303030;transform:scaleX(0.9291);transform-origin:0 0;">Lieu / Empl. par défaut</div>
<div class="t" style="left:44.80px;top:487px;font-size:12px;line-height:13.404px;color:#303030;transform:scaleX(0.9291);transform-origin:0 0;">Lignes de commandes</div>
<div class="t" style="left:697.80px;top:487px;font-size:12px;line-height:13.404px;color:#303030;transform:scaleX(0.9291);transform-origin:0 0;">Lignes de commandes</div>
<div class="t" style="left:44.80px;top:504px;font-size:12px;line-height:13.404px;color:#303030;transform:scaleX(0.9291);transform-origin:0 0;">Liste des accès</div>
<div class="t" style="left:697.80px;top:504px;font-size:12px;line-height:13.404px;color:#303030;transform:scaleX(0.9291);transform-origin:0 0;">Liste des accès</div>
<div class="t" style="left:44.80px;top:521px;font-size:12px;line-height:13.404px;color:#303030;transform:scaleX(0.9291);transform-origin:0 0;">Liste des Etats</div>
<div class="t" style="left:697.80px;top:521px;font-size:12px;line-height:13.404px;color:#303030;transform:scaleX(0.9291);transform-origin:0 0;">Liste des Etats</div>
<div class="t" style="left:44.80px;top:538px;font-size:12px;line-height:13.404px;color:#303030;transform:scaleX(0.9291);transform-origin:0 0;">Liste des machines</div>
<div class="t" style="left:697.80px;top:538px;font-size:12px;line-height:13.404px;color:#303030;transform:scaleX(0.9291);transform-origin:0 0;">Liste des machines</div>
<div class="t" style="left:44.80px;top:555px;font-size:12px;line-height:13.404px;color:#303030;transform:scaleX(0.9291);transform-origin:0 0;">Liste des Phases</div>
<div class="t" style="left:697.80px;top:555px;font-size:12px;line-height:13.404px;color:#303030;transform:scaleX(0.9291);transform-origin:0 0;">Liste des Phases</div>
<div class="t" style="left:44.80px;top:572px;font-size:12px;line-height:13.404px;color:#303030;transform:scaleX(0.9291);transform-origin:0 0;">Liste des Stocks par emplacement</div>
<div class="t" style="left:697.80px;top:572px;font-size:12px;line-height:13.404px;color:#303030;transform:scaleX(0.9291);transform-origin:0 0;">Liste des Stocks par emplacement</div>
<div class="t" style="left:44.80px;top:589px;font-size:12px;line-height:13.404px;color:#303030;transform:scaleX(0.9291);transform-origin:0 0;">Logistique</div>
<div class="t" style="left:697.80px;top:589px;font-size:12px;line-height:13.404px;color:#303030;transform:scaleX(0.9291);transform-origin:0 0;">Logistique</div>
<div class="t" style="left:44.80px;top:606px;font-size:12px;line-height:13.404px;color:#303030;transform:scaleX(0.9291);transform-origin:0 0;">Logistique</div>
<div class="t" style="left:697.80px;top:606px;font-size:12px;line-height:13.404px;color:#303030;transform:scaleX(0.9291);transform-origin:0 0;">Logistique</div>
<div class="t" style="left:44.80px;top:623px;font-size:12px;line-height:13.404px;color:#303030;transform:scaleX(0.9291);transform-origin:0 0;">MàJ Prix Standard au Prix de revient moyen des OFs</div>
<div class="t" style="left:697.80px;top:623px;font-size:12px;line-height:13.404px;color:#303030;transform:scaleX(0.9291);transform-origin:0 0;">MàJ Prix Standard au Prix de revient moyen des OFs</div>
<div class="t" style="left:44.80px;top:640px;font-size:12px;line-height:13.404px;color:#303030;transform:scaleX(0.9291);transform-origin:0 0;">Matin</div>
<div class="t" style="left:697.80px;top:640px;font-size:12px;line-height:13.404px;color:#303030;transform:scaleX(0.9291);transform-origin:0 0;">Matin</div>
<div class="t" style="left:44.80px;top:657px;font-size:12px;line-height:13.404px;color:#303030;transform:scaleX(0.9291);transform-origin:0 0;">message</div>
<div class="t" style="left:697.80px;top:657px;font-size:12px;line-height:13.404px;color:#303030;transform:scaleX(0.9291);transform-origin:0 0;">message</div>
<div class="t" style="left:44.80px;top:674px;font-size:12px;line-height:13.404px;color:#303030;transform:scaleX(0.9291);transform-origin:0 0;">Nomenclature (descendante)</div>
<div class="t" style="left:697.80px;top:674px;font-size:12px;line-height:13.404px;color:#303030;transform:scaleX(0.9291);transform-origin:0 0;">Nomenclature (descendante)</div>
<div class="t" style="left:44.80px;top:691px;font-size:12px;line-height:13.404px;color:#303030;transform:scaleX(0.9291);transform-origin:0 0;">Nomenclature du Macro Produit</div>
<div class="t" style="left:697.80px;top:691px;font-size:12px;line-height:13.404px;color:#303030;transform:scaleX(0.9291);transform-origin:0 0;">Nomenclature du Macro Produit</div>
<div class="t" style="left:44.80px;top:708px;font-size:12px;line-height:13.404px;color:#303030;transform:scaleX(0.9291);transform-origin:0 0;">Nv. Ligne</div>
<div class="t" style="left:697.80px;top:708px;font-size:12px;line-height:13.404px;color:#303030;transform:scaleX(0.9291);transform-origin:0 0;">Nv. Ligne</div>
<div class="t" style="left:44.80px;top:725px;font-size:12px;line-height:13.404px;color:#303030;transform:scaleX(0.9291);transform-origin:0 0;">Nv. Ligne</div>
<div class="t" style="left:697.80px;top:725px;font-size:12px;line-height:13.404px;color:#303030;transform:scaleX(0.9291);transform-origin:0 0;">Nv. Ligne</div>
<div class="t" style="left:44.80px;top:742px;font-size:12px;line-height:13.404px;color:#303030;transform:scaleX(0.9291);transform-origin:0 0;">Oui</div>
<div class="t" style="left:697.80px;top:742px;font-size:12px;line-height:13.404px;color:#303030;transform:scaleX(0.9291);transform-origin:0 0;">Oui</div>
<div class="t" style="left:44.80px;top:759px;font-size:12px;line-height:13.404px;color:#303030;transform:scaleX(0.9291);transform-origin:0 0;">P - Paramètres</div>
<div class="t" style="left:697.80px;top:759px;font-size:12px;line-height:13.404px;color:#303030;transform:scaleX(0.9291);transform-origin:0 0;">P - Paramètres</div>
<div class="t" style="left:44.80px;top:776px;font-size:12px;line-height:13.404px;color:#303030;transform:scaleX(0.9291);transform-origin:0 0;">Pour la quantité de</div>
<div class="t" style="left:697.80px;top:776px;font-size:12px;line-height:13.404px;color:#303030;transform:scaleX(0.9291);transform-origin:0 0;">Pour la quantité de</div>
<div class="t" style="left:44.80px;top:793px;font-size:12px;line-height:13.404px;color:#303030;transform:scaleX(0.9291);transform-origin:0 0;">Prévisions de consommation</div>
<div class="t" style="left:697.80px;top:793px;font-size:12px;line-height:13.404px;color:#303030;transform:scaleX(0.9291);transform-origin:0 0;">Prévisions de consommation</div>
<div class="t" style="left:44.80px;top:810px;font-size:12px;line-height:13.404px;color:#303030;transform:scaleX(0.9291);transform-origin:0 0;">Recalculer</div>
<div class="t" style="left:697.80px;top:810px;font-size:12px;line-height:13.404px;color:#303030;transform:scaleX(0.9291);transform-origin:0 0;">Recalculer</div>
<div class="t" style="left:44.80px;top:827px;font-size:12px;line-height:13.404px;color:#303030;transform:scaleX(0.9291);transform-origin:0 0;">Résultats</div>
<div class="t" style="left:697.80px;top:827px;font-size:12px;line-height:13.404px;color:#303030;transform:scaleX(0.9291);transform-origin:0 0;">Résultats</div>
<div style="position:absolute;left:1345px;top:257px;width:17px;height:572px;background:#d9d9d9"></div>
<div style="position:absolute;left:1345px;top:257px;width:17px;height:18px;background:#fff;border:1px solid #9a9a9a"></div>
<svg style="left:1350px;top:264px" width="7" height="4" viewBox="0 0 7 4"><path d="M0 3.8 L3.5 0.3 L7 3.8Z" fill="#444"/></svg>
<div style="position:absolute;left:1345px;top:812px;width:17px;height:17px;background:#fff;border:1px solid #9a9a9a"></div>
<svg style="left:1350px;top:819px" width="7" height="4" viewBox="0 0 7 4"><path d="M0 0.2 L3.5 3.7 L7 0.2Z" fill="#444"/></svg>
<div style="position:absolute;left:1345px;top:422px;width:17px;height:140px;background:#fff;border:1px solid #8a8a8a"></div>
<div style="position:absolute;left:21px;top:829px;width:1341px;height:43px;background:#f0f0f0;border:1px solid #a0a0a0"></div>
<div class="t" style="left:28.00px;top:847px;font-size:12px;line-height:13.404px;color:#222;transform:scaleX(0.9599);transform-origin:0 0;">Add ...</div>
<div style="position:absolute;left:74px;top:838px;width:72px;height:25px;background:#fff;border:1px solid #8a8a8a"></div>
<div class="t" style="left:97.43px;top:846px;font-size:12px;line-height:13.404px;color:#222;">Nom</div>
<div style="position:absolute;left:20px;top:880px;width:150px;height:30px;background:#f3f3f3;border:1px solid #bdbdbd"></div>
<div class="t" style="left:76.30px;top:889px;font-size:12px;line-height:13.404px;color:#333;transform:scaleX(0.9252);transform-origin:0 0;">Enregistrer</div>
<div style="position:absolute;left:180px;top:880px;width:150px;height:30px;background:#f3f3f3;border:1px solid #bdbdbd"></div>
<div class="t" style="left:243.90px;top:889px;font-size:12px;line-height:13.404px;color:#333;transform:scaleX(0.9066);transform-origin:0 0;">Annuler</div>
<div style="position:absolute;left:339px;top:880px;width:222px;height:30px;background:#f3f3f3;border:1px solid #bdbdbd"></div>
<div class="t" style="left:398.70px;top:889px;font-size:12px;line-height:13.404px;color:#333;transform:scaleX(0.9268);transform-origin:0 0;">Recharger la Traduction</div>
<div style="position:absolute;left:571px;top:880px;width:208px;height:30px;background:#f3f3f3;border:1px solid #bdbdbd"></div>
<div class="t" style="left:628.30px;top:889px;font-size:12px;line-height:13.404px;color:#333;transform:scaleX(0.9361);transform-origin:0 0;">Exporter la Traduction</div>
<div style="position:absolute;left:790px;top:880px;width:214px;height:30px;background:#f3f3f3;border:1px solid #bdbdbd"></div>
<div class="t" style="left:849.40px;top:889px;font-size:12px;line-height:13.404px;color:#333;transform:scaleX(0.9256);transform-origin:0 0;">Régénérer le Français</div>
<div style="position:absolute;left:1213px;top:880px;width:150px;height:30px;background:#f3f3f3;border:1px solid #bdbdbd"></div>
<div class="t" style="left:1278.60px;top:889px;font-size:12px;line-height:13.404px;color:#333;transform:scaleX(0.9052);transform-origin:0 0;">Fermer</div>
<svg style="left:0;top:0" width="1384" height="921" viewBox="0 0 1384 921"><path d="M30.5 888.3 H42 L45.2 891.5 V902 H30.5 Z" fill="#c9c9c9" stroke="#1b7db4" stroke-width="1.6" stroke-linejoin="round"/><rect x="33.3" y="888.5" width="7" height="4.5" fill="#1b7db4"/><rect x="37.5" y="889" width="1.8" height="3" fill="#fff"/><rect x="32.6" y="896" width="10.5" height="5.3" fill="#fff" stroke="#1b7db4" stroke-width="0.9"/><path d="M192.5 891 A6.3 6.3 0 1 1 191.5 897" fill="none" stroke="#e3001b" stroke-width="2.3"/><path d="M189.5 887.5 L190 894 L196.5 892.5 Z" fill="#e3001b"/><rect x="355" y="888" width="3" height="6" fill="#0e7a3c"/><path d="M351.9 893 H361 L356.5 897.6Z" fill="#0e7a3c"/><path d="M349.1 897.6 H353.5 L356.5 900 L359.5 897.6 H364 V901.8 H349.1Z" fill="#0e7a3c"/><rect x="360" y="900" width="3" height="0.9" fill="#fff"/><rect x="587.3" y="892.5" width="3" height="6" fill="#0e7a3c"/><path d="M584.3 893 H593.3 L588.8 888Z" fill="#0e7a3c"/><path d="M581.1 897.6 H585.5 L588.8 900 L592 897.6 H596.4 V901.8 H581.1Z" fill="#0e7a3c"/><rect x="592.3" y="900" width="3" height="0.9" fill="#fff"/><path d="M802.3 893.5 A5.3 5.3 0 0 1 811.5 890.8" fill="none" stroke="#1f5b9c" stroke-width="2.2"/><path d="M814.3 887.5 V893.8 H808Z" fill="#1f5b9c"/><path d="M812 896.5 A5.3 5.3 0 0 1 802.8 899.2" fill="none" stroke="#1f5b9c" stroke-width="2.2"/><path d="M800 902.6 V896.3 H806.3Z" fill="#1f5b9c"/><path d="M1223.7 888.6 L1236.7 901.4 M1236.7 888.6 L1223.7 901.4" stroke="#e81123" stroke-width="3.8" stroke-linecap="round"/></svg>
</body></html>
